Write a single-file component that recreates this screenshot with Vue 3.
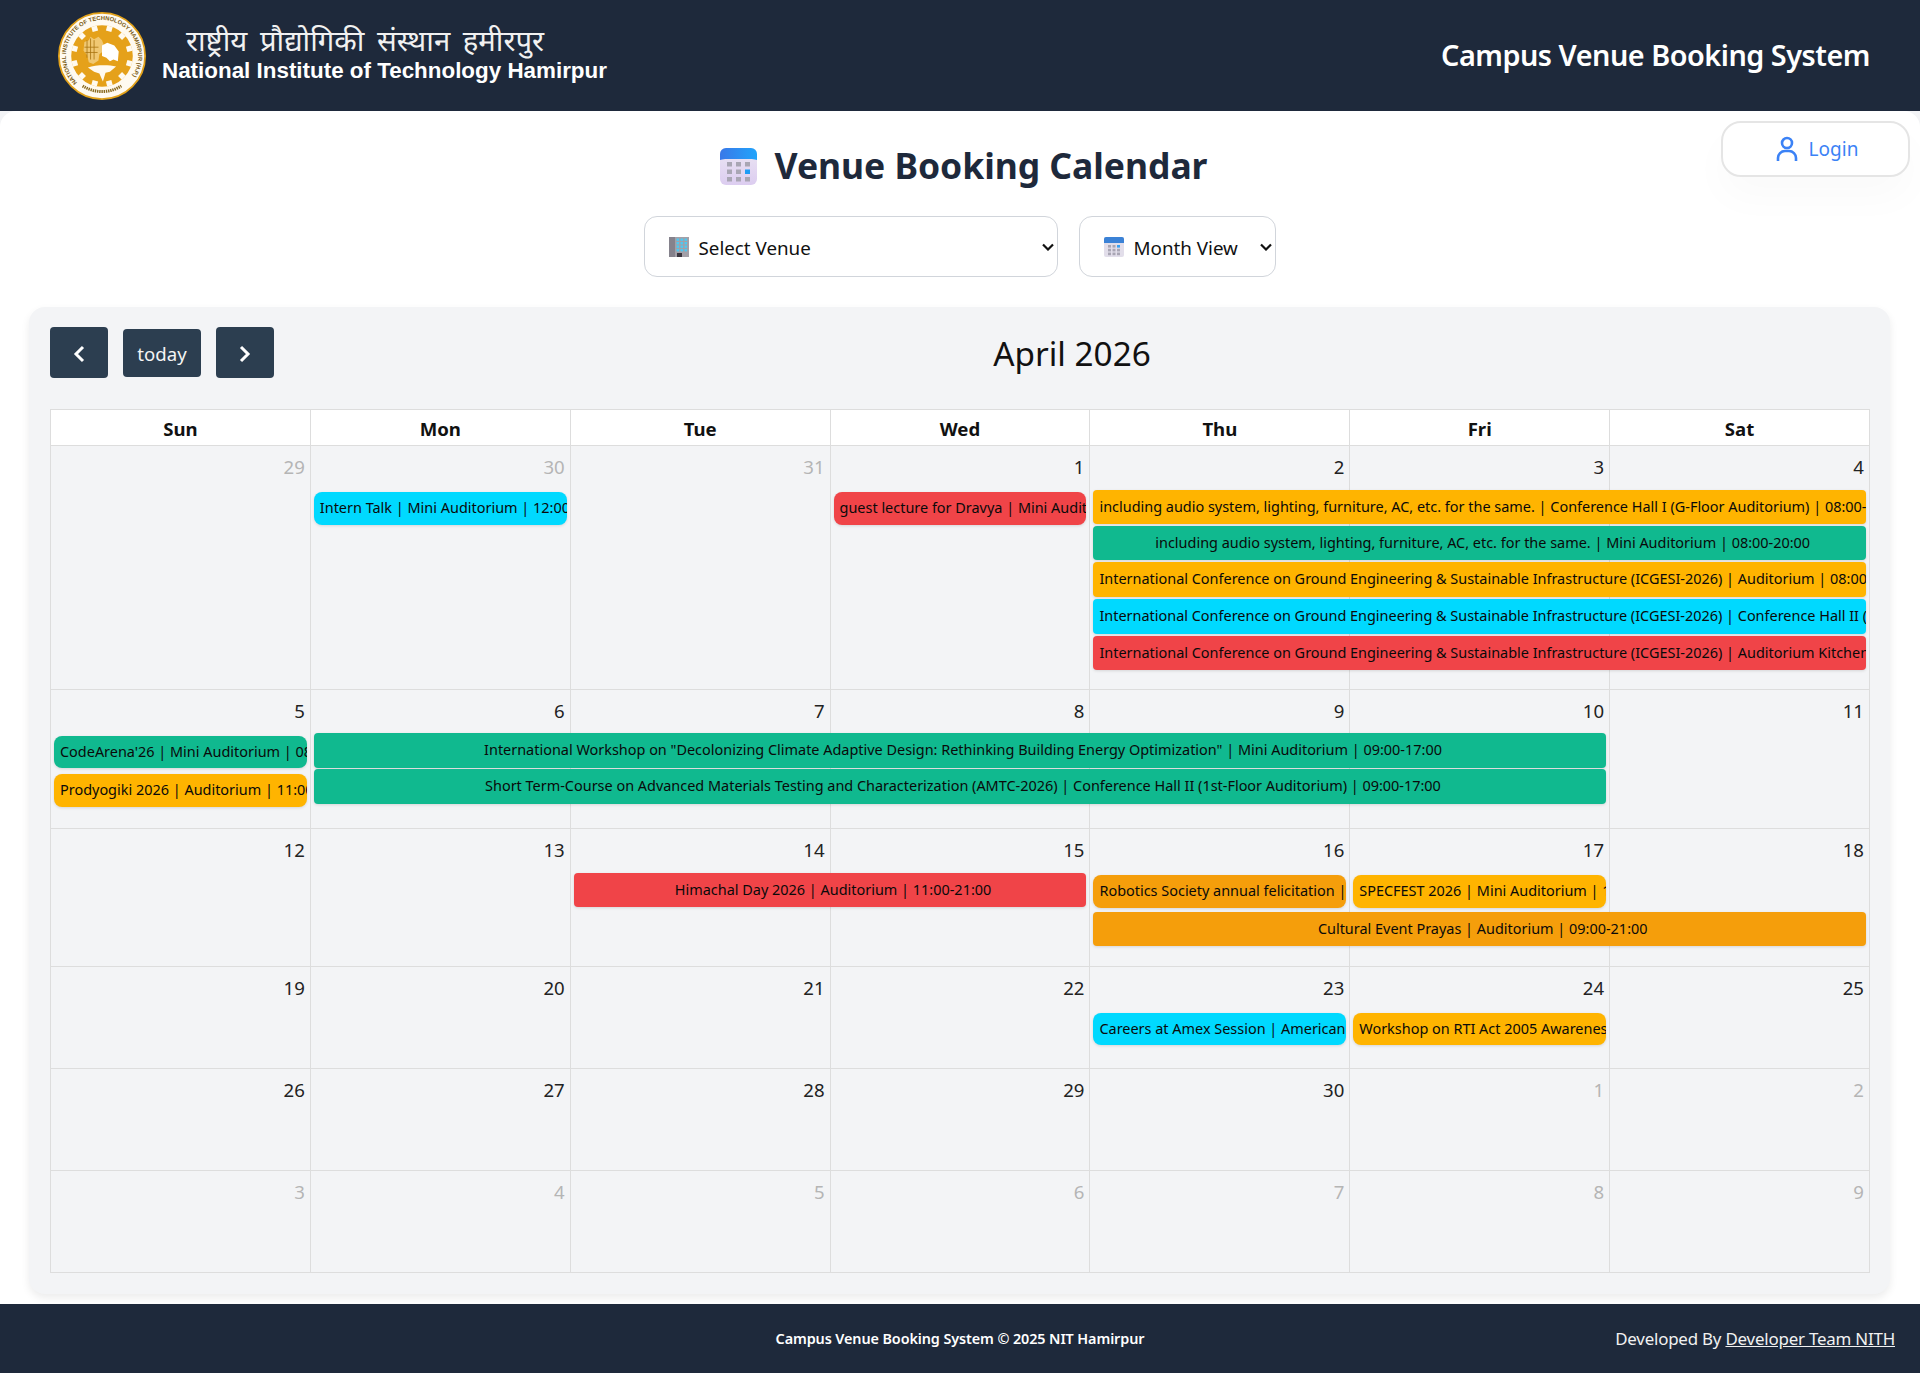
<template>
  <div class="page">
    <header class="top-bar">
      <div class="brand">
        <svg class="seal" viewBox="0 0 100 100" aria-hidden="true">
          <defs>
            <path id="sealRing" d="M22 80 A41 41 0 1 1 78 80" />
          </defs>
          <circle cx="50" cy="50" r="49" fill="#fffaf0" stroke="#e3a21a" stroke-width="2" />
          <text class="seal-text">
            <textPath href="#sealRing" textLength="186" lengthAdjust="spacingAndGlyphs">NATIONAL INSTITUTE OF TECHNOLOGY HAMIRPUR (H.P.)</textPath>
          </text>
          <path d="M28 84 A41 41 0 0 0 72 84" fill="none" stroke="#8a6a20" stroke-width="3.4" stroke-dasharray="1.6 0.9" />
          <circle cx="50" cy="50" r="35" fill="#e5a11a" />
          <rect v-for="t in gearTeeth" :key="t" x="46.8" y="15" width="6.4" height="6" fill="#fffaf0" :transform="`rotate(${t} 50 50)`" />
          <path d="M30 34l5-2 2-4 4 3 5-3 4 4 3 8-2 5-4 3-1 7-6 4-5-2-2-8-4-5z" fill="#f0c873" />
          <path d="M33 32v20M37 30v24M41 32v22M30 40h16M31 46h14" stroke="#a8740f" stroke-width="0.9" fill="none" />
          <path d="M50 38l6-3 8 3 5 7-1 11-5-2-4 2-4-4-5-2z" fill="#fff" />
          <path d="M34 63c9-3 24-3 32-1l-7 6-5 1-3 10-4-9-6-2z" fill="#fffaf0" />
        </svg>
        <div class="brand-names">
          <div class="name-hi">राष्ट्रीय प्रौद्योगिकी संस्थान हमीरपुर</div>
          <div class="name-en">National Institute of Technology Hamirpur</div>
        </div>
      </div>
      <div class="app-name">Campus Venue Booking System</div>
    </header>

    <main class="content">
      <button class="login-btn">
        <svg width="22" height="26" viewBox="0 0 22 26" fill="none" stroke="#3b82f6" stroke-width="2.6" aria-hidden="true">
          <circle cx="11" cy="7" r="5" />
          <path d="M2 25v-3a7 7 0 0 1 7-7h4a7 7 0 0 1 7 7v3" />
        </svg>
        <span>Login</span>
      </button>

      <h1 class="page-title">
        <svg class="title-icon" viewBox="0 0 37 37" aria-hidden="true">
          <defs>
            <linearGradient id="calBody" x1="0" y1="0" x2="0" y2="1">
              <stop offset="0" stop-color="#ece6f3" />
              <stop offset="1" stop-color="#dccdf0" />
            </linearGradient>
            <linearGradient id="calTop" x1="0" y1="0" x2="1" y2="0">
              <stop offset="0" stop-color="#3a78e8" />
              <stop offset="1" stop-color="#21a4fb" />
            </linearGradient>
          </defs>
          <rect width="37" height="37" rx="6" fill="url(#calBody)" />
          <path d="M0 12V6a6 6 0 0 1 6-6h25a6 6 0 0 1 6 6v6c-3-1-5-1-6-1H6c-1 0-3 0-6 1z" fill="url(#calTop)" />
          <template v-for="row in 3" :key="row">
            <rect v-for="col in 3" :key="col" :x="7 + (col - 1) * 9" :y="14 + (row - 1) * 7.5" width="5" height="4.5"
              :fill="row === 2 && col === 3 ? '#1f9cf5' : '#a9a6b4'" />
          </template>
        </svg>
        <span>Venue Booking Calendar</span>
      </h1>

      <div class="filters">
        <div class="pick pick-venue">
          <svg width="20" height="20" viewBox="0 0 20 20" aria-hidden="true">
            <rect width="20" height="20" fill="#a3a0a8" />
            <rect width="6" height="20" fill="#85828c" />
            <rect v-for="w in buildingWindows" :key="w.k" :x="w.x" :y="w.y" width="2.6" height="2.4" fill="#4fc8f0" />
            <rect x="8" y="16" width="5" height="4" fill="#3b3740" />
          </svg>
          <span>Select Venue</span>
          <svg class="chev" width="12" height="8" viewBox="0 0 12 8" fill="none" stroke="#111" stroke-width="2.2"><path d="M1 1.5l5 5 5-5" /></svg>
        </div>
        <div class="pick pick-view">
          <svg width="20" height="20" viewBox="0 0 20 20" aria-hidden="true">
            <rect width="20" height="20" rx="2" fill="#e2deea" />
            <path d="M0 6V2a2 2 0 0 1 2-2h16a2 2 0 0 1 2 2v4z" fill="#3b82d6" />
            <template v-for="row in 3" :key="row">
              <rect v-for="col in 3" :key="col" :x="4 + (col - 1) * 4.5" :y="8 + (row - 1) * 3.8" width="3" height="2.6"
                :fill="row === 1 && col === 3 ? '#38a0f0' : '#a9a6b4'" />
            </template>
          </svg>
          <span>Month View</span>
          <svg class="chev" width="12" height="8" viewBox="0 0 12 8" fill="none" stroke="#111" stroke-width="2.2"><path d="M1 1.5l5 5 5-5" /></svg>
        </div>
      </div>

      <section class="calendar-card">
        <div class="toolbar">
          <div class="nav-btns">
            <button class="nav-btn arrow">
              <svg width="12" height="18" viewBox="0 0 12 18" fill="none" stroke="#fff" stroke-width="3"><path d="M10 2L3 9l7 7" /></svg>
            </button>
            <button class="nav-btn today">today</button>
            <button class="nav-btn arrow">
              <svg width="12" height="18" viewBox="0 0 12 18" fill="none" stroke="#fff" stroke-width="3"><path d="M2 2l7 7-7 7" /></svg>
            </button>
          </div>
          <h2 class="month-title">April 2026</h2>
          <div></div>
        </div>

        <div class="month-grid">
          <div class="week-head">
            <div v-for="d in dayNames" :key="d" class="head-cell">{{ d }}</div>
          </div>
          <div v-for="(week, i) in weeks" :key="i" class="week" :style="{ height: week.height + 'px' }">
            <div v-for="(day, j) in week.days" :key="j" class="day" :class="{ muted: day < 0 }" :style="{ gridColumn: j + 1 }">
              {{ Math.abs(day) }}
            </div>
            <div v-for="(lane, k) in week.lanes" :key="k" class="lane"
              :style="{ gridColumn: `${lane.col} / span ${lane.span}`, paddingTop: lane.top + 'px', gap: (lane.gap || 0) + 'px' }">
              <div v-for="ev in lane.events" :key="ev.text" class="event" :class="[ev.color, { center: ev.center, long: lane.span > 1 }]"
                :style="{ height: (ev.h || 34) + 'px' }">
                <span>{{ ev.text }}</span>
              </div>
            </div>
          </div>
        </div>
      </section>
    </main>

    <footer class="bottom-bar">
      <div></div>
      <div class="copy">Campus Venue Booking System © 2025 NIT Hamirpur</div>
      <div class="dev">Developed By <a href="#">Developer Team NITH</a></div>
    </footer>
  </div>
</template>

<script setup>
const dayNames = ['Sun', 'Mon', 'Tue', 'Wed', 'Thu', 'Fri', 'Sat']

const gearTeeth = Array.from({ length: 12 }, (_, i) => i * 30 + 15)

const buildingWindows = []
for (let r = 0; r < 4; r++) {
  for (let c = 0; c < 3; c++) {
    buildingWindows.push({ k: `${r}-${c}`, x: 7.5 + c * 4, y: 1.5 + r * 3.5 })
  }
}

// 负数表示不属于当前月份的日期
const weeks = [
  {
    height: 244,
    days: [-29, -30, -31, 1, 2, 3, 4],
    lanes: [
      { col: 2, span: 1, top: 46, events: [{ text: 'Intern Talk | Mini Auditorium | 12:00-13:00', color: 'cyan', h: 33 }] },
      { col: 4, span: 1, top: 46, events: [{ text: 'guest lecture for Dravya | Mini Auditorium | 10:00-12:00', color: 'red', h: 33 }] },
      {
        col: 5, span: 3, top: 44, gap: 2,
        events: [
          { text: 'including audio system, lighting, furniture, AC, etc. for the same. | Conference Hall I (G-Floor Auditorium) | 08:00-20:00', color: 'amber' },
          { text: 'including audio system, lighting, furniture, AC, etc. for the same. | Mini Auditorium | 08:00-20:00', color: 'green', center: true },
          { text: 'International Conference on Ground Engineering & Sustainable Infrastructure (ICGESI-2026) | Auditorium | 08:00-20:00', color: 'amber', h: 35 },
          { text: 'International Conference on Ground Engineering & Sustainable Infrastructure (ICGESI-2026) | Conference Hall II (1st-Floor Auditorium) | 08:00-20:00', color: 'cyan', h: 35 },
          { text: 'International Conference on Ground Engineering & Sustainable Infrastructure (ICGESI-2026) | Auditorium Kitchen | 08:00-20:00', color: 'red', h: 34 }
        ]
      }
    ]
  },
  {
    height: 139,
    days: [5, 6, 7, 8, 9, 10, 11],
    lanes: [
      {
        col: 1, span: 1, top: 46, gap: 6,
        events: [
          { text: "CodeArena'26 | Mini Auditorium | 08:00-20:00", color: 'green', h: 32 },
          { text: 'Prodyogiki 2026 | Auditorium | 11:00-17:00', color: 'amber', h: 33 }
        ]
      },
      {
        col: 2, span: 5, top: 43, gap: 1,
        events: [
          { text: 'International Workshop on "Decolonizing Climate Adaptive Design: Rethinking Building Energy Optimization" | Mini Auditorium | 09:00-17:00', color: 'green', center: true, h: 35 },
          { text: 'Short Term-Course on Advanced Materials Testing and Characterization (AMTC-2026) | Conference Hall II (1st-Floor Auditorium) | 09:00-17:00', color: 'green', center: true, h: 35 }
        ]
      }
    ]
  },
  {
    height: 138,
    days: [12, 13, 14, 15, 16, 17, 18],
    lanes: [
      { col: 3, span: 2, top: 44, events: [{ text: 'Himachal Day 2026 | Auditorium | 11:00-21:00', color: 'red', center: true }] },
      { col: 5, span: 1, top: 46, events: [{ text: 'Robotics Society annual felicitation | Mini Auditorium | 17:00-20:00', color: 'orange', h: 33 }] },
      { col: 6, span: 1, top: 46, events: [{ text: 'SPECFEST 2026 | Mini Auditorium | 10:00-18:00', color: 'amber', h: 33 }] },
      { col: 5, span: 3, top: 83, events: [{ text: 'Cultural Event Prayas | Auditorium | 09:00-21:00', color: 'orange', center: true }] }
    ]
  },
  {
    height: 102,
    days: [19, 20, 21, 22, 23, 24, 25],
    lanes: [
      { col: 5, span: 1, top: 46, events: [{ text: 'Careers at Amex Session | American Express | 16:00-18:00', color: 'cyan', h: 32 }] },
      { col: 6, span: 1, top: 46, events: [{ text: 'Workshop on RTI Act 2005 Awareness | Auditorium | 10:00-13:00', color: 'amber', h: 32 }] }
    ]
  },
  { height: 102, days: [26, 27, 28, 29, 30, -1, -2], lanes: [] },
  { height: 102, days: [-3, -4, -5, -6, -7, -8, -9], lanes: [] }
]
</script>

<style>
html, body {
  margin: 0;
  background: #f3f4f6;
}
</style>

<style scoped>
.page {
  font-family: "Noto Sans", "Open Sans", sans-serif;
  color: #111;
  height: 1373px;
  display: flex;
  flex-direction: column;
  overflow: hidden;
}

.top-bar {
  height: 111px;
  background: #1e293b;
  display: flex;
  align-items: center;
  justify-content: space-between;
  padding: 0 50px 0 58px;
  box-sizing: border-box;
  flex-shrink: 0;
}

.brand {
  display: flex;
  align-items: center;
  gap: 16px;
}

.seal {
  width: 88px;
  height: 88px;
  margin-top: 1px;
}

.seal-text {
  font-family: "Liberation Sans", sans-serif;
  font-size: 6.6px;
  font-weight: 700;
  fill: #7a5a14;
}

.brand-names {
  color: #fff;
  margin-top: -2px;
}

.name-hi {
  font-family: "Noto Sans", "DejaVu Sans", serif;
  font-size: 29.3px;
  line-height: 33px;
  padding-left: 24px;
  word-spacing: 5px;
  color: #f1f1f1;
}

.name-en {
  font-family: "Liberation Sans", Arial, sans-serif;
  font-size: 22.4px;
  font-weight: 700;
  line-height: 28px;
}

.app-name {
  color: #fff;
  font-size: 28.8px;
  font-weight: 600;
  letter-spacing: -0.48px;
  margin-top: -2px;
}

.content {
  position: relative;
  flex: 1;
  background: #fff;
  border-radius: 16px 16px 0 0;
  padding: 34px 30px 10px 29px;
  display: flex;
  flex-direction: column;
  box-sizing: border-box;
}

.login-btn {
  position: absolute;
  top: 10px;
  right: 10px;
  width: 189px;
  height: 56px;
  border: 2px solid #e5e5e5;
  border-radius: 20px;
  background: #fff;
  box-shadow: 0 20px 40px rgba(0, 0, 0, 0.025);
  color: #3b82f6;
  font-family: inherit;
  font-size: 19px;
  display: flex;
  align-items: center;
  justify-content: center;
  gap: 11px;
  padding: 0 0 0 3px;
}

.page-title {
  margin: 0;
  height: 40px;
  display: flex;
  align-items: center;
  justify-content: center;
  gap: 18px;
  font-size: 35.5px;
  font-weight: 700;
  letter-spacing: -0.05px;
  color: #1e293b;
  padding-left: 8px;
}

.title-icon {
  width: 37px;
  height: 37px;
  margin-top: 2px;
}

.filters {
  display: flex;
  justify-content: center;
  gap: 21px;
  margin-top: 31px;
}

.pick {
  height: 61px;
  box-sizing: border-box;
  border: 1px solid #d1d5db;
  border-radius: 13px;
  background: #fff;
  display: flex;
  align-items: center;
  font-size: 18.8px;
  color: #111;
  gap: 10px;
  padding-left: 24px;
  position: relative;
}

.pick span {
  padding-top: 3px;
}

.pick-venue {
  width: 414px;
}

.pick-view {
  width: 197px;
}

.chev {
  position: absolute;
  right: 3px;
  top: 26px;
}

.calendar-card {
  margin-top: 30px;
  background: #f3f4f6;
  border-radius: 16px;
  box-shadow: 0 4px 8px rgba(0, 0, 0, 0.08);
  padding: 20px 20px 21px 21px;
}

.toolbar {
  display: flex;
  justify-content: space-between;
  align-items: center;
  height: 51px;
  margin-bottom: 31px;
}

.nav-btns {
  display: flex;
  align-items: center;
  gap: 15px;
  width: 224px;
}

.nav-btn {
  border: 0;
  border-radius: 4px;
  background: #2c3e50;
  color: #f4f4f4;
  font-family: inherit;
  padding: 0;
  display: flex;
  align-items: center;
  justify-content: center;
}

.nav-btn.arrow {
  width: 58px;
  height: 51px;
  padding-top: 3px;
  box-sizing: border-box;
}

.nav-btn.today {
  width: 78px;
  height: 48px;
  font-size: 18.6px;
  padding-top: 2px;
  box-sizing: border-box;
}

.month-title {
  margin: 0;
  font-size: 33.3px;
  font-weight: 400;
  color: #111;
}

.month-grid {
  border-top: 1px solid #ddd;
  border-left: 1px solid #ddd;
}

.week-head {
  display: grid;
  grid-template-columns: repeat(7, 1fr);
  height: 36px;
  background: #fff;
  border-bottom: 1px solid #ddd;
  box-sizing: border-box;
}

.head-cell {
  border-right: 1px solid #ddd;
  text-align: center;
  font-size: 18.6px;
  font-weight: 700;
  line-height: 38px;
  color: #111;
}

.week {
  display: grid;
  grid-template-columns: repeat(7, 1fr);
  grid-template-rows: 1fr;
  border-bottom: 1px solid #ddd;
  box-sizing: border-box;
  min-height: 0;
}

.day {
  grid-row: 1;
  border-right: 1px solid #ddd;
  text-align: right;
  padding: 7px 5px 0 0;
  font-size: 18.6px;
  line-height: 28px;
  color: #222;
}

.day.muted {
  color: #b5b5b5;
}

.lane {
  grid-row: 1;
  display: flex;
  flex-direction: column;
  margin: 0 4px 0 3px;
  min-width: 0;
}

.event {
  display: flex;
  align-items: center;
  overflow: hidden;
  white-space: nowrap;
  border-radius: 8px;
  padding: 0 0 2px 6px;
  font-size: 14.45px;
  color: #0a0a0a;
  box-shadow: 0 1px 3px rgba(0, 0, 0, 0.12);
  box-sizing: border-box;
  flex-shrink: 0;
}

.event.long {
  border-radius: 4px;
}

.event.center {
  justify-content: center;
}

.event.cyan { background: #00d9ff; }
.event.red { background: #f04448; }
.event.amber { background: #ffb400; }
.event.green { background: #10b98f; }
.event.orange { background: #f59e0b; }

.bottom-bar {
  height: 70px;
  flex-shrink: 0;
  background: #1e293b;
  color: #fff;
  display: grid;
  grid-template-columns: 1fr auto 1fr;
  align-items: center;
  padding: 0 25px;
  box-sizing: border-box;
}

.copy {
  font-size: 14.4px;
  font-weight: 600;
  letter-spacing: -0.1px;
  padding-bottom: 2px;
}

.dev {
  text-align: right;
  font-size: 16.9px;
  letter-spacing: -0.2px;
  color: #f1f1f1;
  padding-bottom: 1px;
}

.dev a {
  color: inherit;
  text-decoration: underline;
}
</style>
